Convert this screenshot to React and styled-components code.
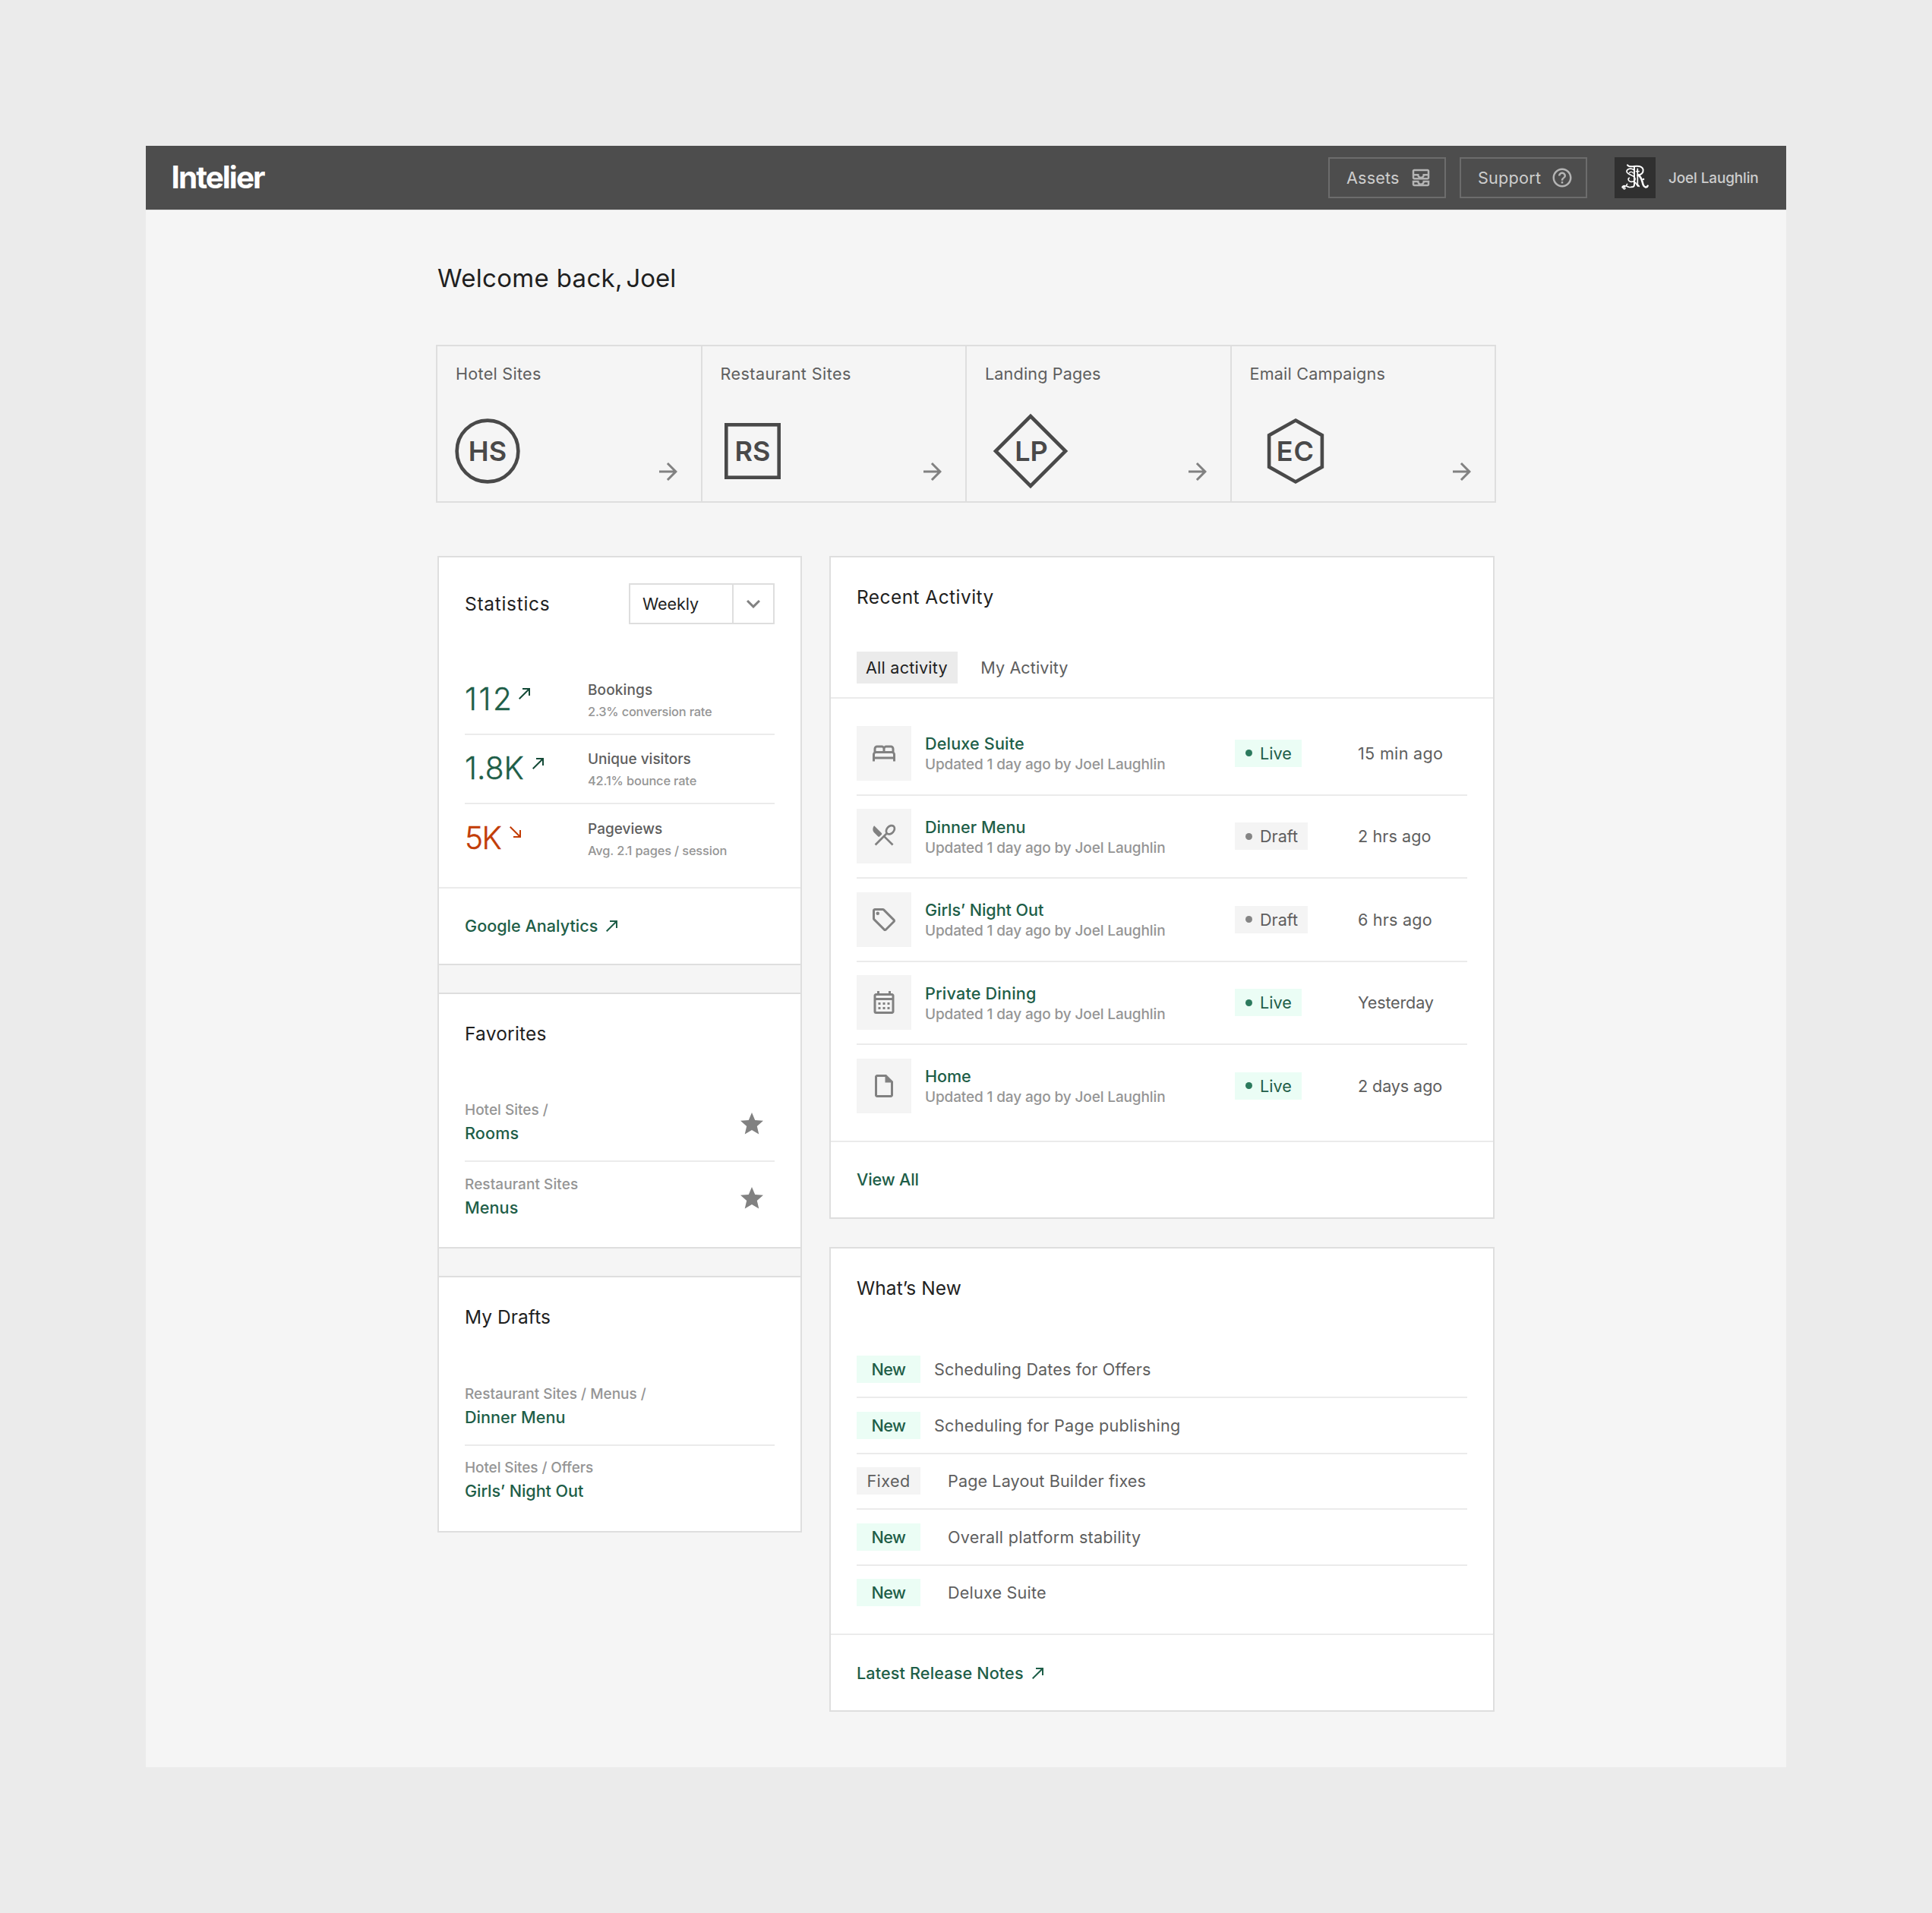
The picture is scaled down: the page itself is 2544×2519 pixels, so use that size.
import React from 'react';
import styled, { createGlobalStyle } from 'styled-components';
import {
  MdOutlineAllInbox, MdHelpOutline, MdOutlineBed, MdOutlineLocalOffer, MdOutlineCalendarMonth,
  MdOutlineInsertDriveFile, MdStar, MdExpandMore, MdArrowForward, MdCallMade,
} from 'react-icons/md';

const color = {
  backdrop: '#ebebeb',
  surface: '#f5f5f5',
  bar: '#4d4d4d',
  ink: '#1f1f1f',
  text: '#5e5e5e',
  muted: '#959595',
  icon: '#818181',
  border: '#dedede',
  rule: '#ebebeb',
  green: '#1e5e48',
  greenDark: '#144a37',
  greenDot: '#2c7a5d',
  mint: '#ebfdf5',
  red: '#c23c05',
};

const GlobalStyle = createGlobalStyle`
  *, *::before, *::after { box-sizing: border-box; }
  body {
    margin: 0;
    background: ${color.backdrop};
    font-family: Inter, "Liberation Sans", sans-serif;
    font-size: 21.6px;
    color: ${color.ink};
    -webkit-font-smoothing: antialiased;
  }
  h1, h2, p { margin: 0; font-weight: 400; }
  svg { display: block; flex: none; }
`;

const track = ({ $track = 0 }) => `letter-spacing: ${$track}px;`;

/* ---------- shell ---------- */

const Backdrop = styled.div`
  min-height: 2519px;
  padding: 192px 192px 192px;
`;

const Frame = styled.div`
  width: 2160px;
  height: 2135px;
  background: ${color.surface};
`;

const TopBar = styled.header`
  display: flex;
  align-items: center;
  height: 84px;
  padding: 0 37px 0 33.5px;
  background: ${color.bar};
  box-shadow: 0 1px 0 #e0e0e0;
`;

const Brand = styled.div`
  flex: 1;
  font-size: 40.5px;
  line-height: 48px;
  font-weight: 700;
  letter-spacing: -1.95px;
  color: #fff;
`;

const NavButton = styled.button`
  display: flex;
  align-items: center;
  justify-content: space-between;
  width: ${({ $width }) => $width}px;
  height: 54px;
  margin-right: 18px;
  padding: 0 16px 0 22px;
  border: 2px solid #6c6c6c;
  background: none;
  font: inherit;
  color: #cdcdcd;
  ${track}
  svg { color: #b4b4b4; }
`;

const Avatar = styled.div`
  width: 54px;
  height: 54px;
  margin-left: 18px;
  background: #303030;
`;

const UserName = styled.div`
  width: 118px;
  margin-left: 17px;
  font-size: 19px;
  font-weight: 500;
  letter-spacing: -0.15px;
  color: #cdcdcd;
  white-space: nowrap;
`;

const Main = styled.main`
  width: 1392px;
  margin: 0 auto;
  padding-top: 70px;
`;

const Welcome = styled.h1`
  font-size: 33px;
  line-height: 40px;
  letter-spacing: 0.32px;
`;

const FirstName = styled.span`
  margin-left: -5px;
  letter-spacing: 0;
`;

/* ---------- site tiles ---------- */

const Tiles = styled.div`
  display: grid;
  grid-template-columns: repeat(4, 1fr);
  width: 1396px;
  margin: 68px 0 70px -2px;
  border: solid ${color.border};
  border-width: 2px 2px 2px 0;
`;

const Tile = styled.a`
  height: 204px;
  padding: 24px 25px 0 24px;
  border-left: 2px solid ${color.border};
`;

const TileLabel = styled.div`
  line-height: 24px;
  color: ${color.text};
  ${track}
`;

const TileFoot = styled.div`
  display: flex;
  align-items: flex-end;
  justify-content: space-between;
  margin-top: 40px;
  svg:last-child { margin-bottom: 5px; color: ${color.icon}; }
`;

const Emblem = styled.svg`
  overflow: visible;
  fill: none;
  stroke: #494949;
  stroke-width: 4.6;
  text {
    fill: #494949;
    stroke: none;
    font: 600 36px Inter, "Liberation Sans", sans-serif;
    text-anchor: middle;
  }
`;

/* ---------- cards ---------- */

const Columns = styled.div`
  display: grid;
  grid-template-columns: 480px 876px;
  justify-content: space-between;
  align-items: start;
`;

const Card = styled.section`
  border: 2px solid ${color.border};
  background: #fff;
`;

const Stack = styled.div`
  border: solid ${color.border};
  border-width: 0 2px;
`;

const StackCard = styled.section`
  border: solid ${color.border};
  border-width: 2px 0;
  height: ${({ $height }) => $height}px;
  margin-bottom: 36px;
  background: #fff;
  &:last-child { margin-bottom: 0; }
`;

const CardHead = styled.div`
  display: flex;
  align-items: center;
  justify-content: space-between;
  padding: ${({ $top = 36 }) => $top}px 34px 0;
`;

const CardTitle = styled.h2`
  font-size: 24.5px;
  line-height: 32px;
  ${track}
`;

const CardFoot = styled.div`
  display: flex;
  align-items: center;
  height: 101px;
  margin-top: ${({ $gap = 16 }) => $gap}px;
  padding: 0 34px;
  border-top: 2px solid ${color.rule};
`;

const FootLink = styled.a`
  display: flex;
  align-items: center;
  gap: 7px;
  line-height: 28px;
  font-weight: 500;
  color: ${color.green};
  ${track}
`;

const Rows = styled.div`
  margin: ${({ $top }) => $top}px 34px 0;
`;

const Row = styled.div`
  display: flex;
  align-items: center;
  height: ${({ $height }) => $height}px;
  border-bottom: 2px solid ${color.rule};
  &:last-child { border-bottom-color: transparent; }
`;

/* ---------- statistics ---------- */

const Select = styled.div`
  display: flex;
  width: 192px;
  height: 54px;
  border: 2px solid ${color.border};
`;

const SelectValue = styled.div`
  flex: 1;
  padding-left: 16px;
  line-height: 50px;
  letter-spacing: -0.1px;
`;

const SelectToggle = styled.div`
  display: flex;
  align-items: center;
  justify-content: center;
  width: 54px;
  border-left: 2px solid ${color.border};
  color: ${color.icon};
`;

const Figure = styled.div`
  display: flex;
  width: 162px;
  padding-left: ${({ $indent }) => $indent}px;
  color: ${({ $down }) => ($down ? color.red : color.green)};
  svg {
    margin: ${({ $down }) => ($down ? '4px' : '4.5px')} 0 0 ${({ $gap }) => $gap}px;
    color: ${({ $down }) => ($down ? color.red : color.greenDark)};
    transform: ${({ $down }) => ($down ? 'rotate(90deg)' : 'none')};
  }
`;

const FigureValue = styled.span`
  font-size: 40.5px;
  line-height: 48px;
  font-weight: 300;
  -webkit-text-stroke: 0.4px currentColor;
  ${track}
`;

const Metric = styled.div`
  padding-top: 4px;
  font-weight: 500;
  line-height: 28px;
`;

const MetricName = styled.div`
  font-size: 19px;
  color: ${color.text};
  ${track}
`;

const MetricNote = styled.div`
  font-size: 16.4px;
  color: ${color.muted};
  ${track}
`;

/* ---------- favorites / drafts ---------- */

const Crumb = styled.div`
  flex: 1;
  padding-bottom: 6px;
`;

const CrumbPath = styled.div`
  font-size: 19px;
  line-height: 31px;
  font-weight: 500;
  color: ${color.muted};
  ${track}
`;

const CrumbName = styled.a`
  display: block;
  line-height: 31px;
  font-weight: 500;
  color: ${color.green};
  ${track}
`;

const StarSlot = styled.span`
  margin-right: 12px;
  color: ${color.icon};
`;

/* ---------- activity ---------- */

const Tabs = styled.div`
  display: flex;
  gap: 18px;
  margin-top: 56px;
  padding: 0 34px 18px;
  border-bottom: 2px solid ${color.rule};
`;

const Tab = styled.a`
  padding: 0 13.5px 0 12px;
  line-height: 42px;
  background: ${({ $active }) => ($active ? '#ebebeb' : 'none')};
  color: ${({ $active }) => ($active ? color.ink : color.text)};
  ${track}
`;

const Thumb = styled.div`
  display: grid;
  place-items: center;
  width: 72px;
  height: 72px;
  background: #f4f4f4;
  color: ${color.icon};
`;

const Entry = styled.div`
  width: 408px;
  margin-left: 18px;
  padding-top: 3px;
  line-height: 27px;
`;

const EntryName = styled.a`
  display: block;
  font-weight: 500;
  color: ${color.green};
  ${track}
`;

const EntryNote = styled.div`
  font-size: 19px;
  font-weight: 500;
  letter-spacing: -0.13px;
  color: ${color.muted};
`;

const StatusCell = styled.div`
  width: 162px;
`;

const Badge = styled.span`
  display: inline-flex;
  align-items: center;
  justify-content: ${({ $width }) => ($width ? 'center' : 'flex-start')};
  width: ${({ $width }) => ($width ? `${$width}px` : 'auto')};
  height: 36px;
  padding: ${({ $width }) => ($width ? '0' : '0 13px 0 13.5px')};
  background: ${({ $tone }) => ($tone === 'green' ? color.mint : '#f4f4f4')};
  color: ${({ $tone }) => ($tone === 'green' ? color.green : color.text)};
  font-weight: ${({ $strong }) => ($strong ? 500 : 400)};
  vertical-align: top;
  ${track}
`;

const Dot = styled.span`
  width: 9px;
  height: 9px;
  margin-right: 10.5px;
  border-radius: 50%;
  background: ${({ $tone }) => ($tone === 'green' ? color.greenDot : '#858585')};
`;

const When = styled.div`
  color: ${color.text};
  ${track}
`;

/* ---------- what's new ---------- */

const News = styled.div`
  margin-left: ${({ $inset }) => ($inset ? 36 : 18)}px;
  color: ${color.text};
  ${track}
`;

const RightColumn = styled.div`
  display: grid;
  gap: 37px;
`;

/* ---------- drawings ---------- */

const RestaurantIcon = () => (
  <svg width="36" height="36" viewBox="0 0 24 24" fill="none" stroke="currentColor" strokeWidth="1.8">
    <path
      d="M3.4 2.9 9.9 9.4c.35.35.35.9 0 1.25L8.1 12.4c-.35.35-.9.35-1.25 0L3.3 8.85C1.9 7.4 1.85 4.8 3.4 2.9Z"
      fill="currentColor"
      stroke="none"
    />
    <ellipse cx="17.6" cy="6.5" rx="4.3" ry="3.1" transform="rotate(-48 17.6 6.5)" />
    <path d="M14.7 9.3 4.4 19.7M12 12.1l7.7 7.6" />
  </svg>
);

const Monogram = () => (
  <svg width="54" height="54" viewBox="0 0 162 162" fill="none" stroke="#fff" strokeLinecap="round" strokeLinejoin="round">
    <path d="M51 31c6 9 16 6 26 5 18-2 34-1 36 14 1 12-7 20-22 21" strokeWidth="6" />
    <path d="M78 38v70c0 7-5 10-11 10" strokeWidth="6" />
    <path d="M91 46v62l6 7" strokeWidth="5" />
    <path d="M94 71c14 8 14 24 19 38 4 11 15 13 18 4" strokeWidth="7.5" />
    <path d="M76 50c-10-8-27-5-28 6-1 14 30 13 33 28 2 13-14 16-23 10-5-4-5-10 0-12" strokeWidth="5" />
    <path d="M58 62c5-6 13-4 15 1" strokeWidth="4" />
    <path d="M66 118c-8 4-14-5-22-4-9 1-13 8-8 11 6 3 8-4 3-6M50 106c-6 4-3 10 4 12M44 114c-8-3-14 0-14 5" strokeWidth="4.5" />
    <path d="M82 100l10 14" strokeWidth="5" />
    <path d="M91 50v12M85 56h12" strokeWidth="4" />
    <circle cx="114" cy="87" r="4" fill="#fff" stroke="none" />
  </svg>
);

const shapes = {
  HS: <circle cx="42" cy="50" r="40.4" />,
  RS: <rect x="7.3" y="15.3" width="69.4" height="69.4" />,
  LP: <path d="M60 4 106 50 60 96 14 50Z" />,
  EC: <path d="M60 9.6 94.9 29.2V70.8L60 90.4 25.1 70.8V29.2Z" />,
};

const tiles = [
  { code: 'HS', label: 'Hotel Sites', t: 0.27, w: 84, x: 42 },
  { code: 'RS', label: 'Restaurant Sites', t: 0.41, w: 84, x: 42 },
  { code: 'LP', label: 'Landing Pages', t: 0.14, w: 120, x: 61 },
  { code: 'EC', label: 'Email Campaigns', t: 0.2, w: 120, x: 60, lt: 1.2 },
];

const stats = [
  { value: '112', t: 2.5, indent: 0, gap: 3, name: 'Bookings', nt: 0.14, note: '2.3% conversion rate', ot: -0.19 },
  { value: '1.8K', t: 0.1, indent: 0, gap: 7.5, name: 'Unique visitors', nt: 0, note: '42.1% bounce rate', ot: -0.15 },
  { value: '5K', t: -1.6, indent: -1, gap: 8, down: true, name: 'Pageviews', nt: 0.03, note: 'Avg. 2.1 pages / session', ot: -0.15 },
];

const favorites = [
  { path: 'Hotel Sites /', pt: 0, name: 'Rooms', nt: 0.13 },
  { path: 'Restaurant Sites', pt: 0.08, name: 'Menus', nt: 0.08 },
];

const drafts = [
  { path: 'Restaurant Sites / Menus /', pt: 0, name: 'Dinner Menu', nt: 0.03 },
  { path: 'Hotel Sites / Offers', pt: -0.11, name: 'Girls’ Night Out', nt: -0.06 },
];

const activity = [
  { icon: <MdOutlineBed size={36} />, name: 'Deluxe Suite', nt: 0.16, live: true, when: '15 min ago', wt: 0.3 },
  { icon: <RestaurantIcon />, name: 'Dinner Menu', nt: 0.03, live: false, when: '2 hrs ago', wt: 0.07 },
  { icon: <MdOutlineLocalOffer size={36} />, name: 'Girls’ Night Out', nt: -0.06, live: false, when: '6 hrs ago', wt: 0.19 },
  { icon: <MdOutlineCalendarMonth size={36} />, name: 'Private Dining', nt: 0.19, live: true, when: 'Yesterday', wt: -0.18 },
  { icon: <MdOutlineInsertDriveFile size={36} />, name: 'Home', nt: -0.1, live: true, when: '2 days ago', wt: -0.11 },
];

const news = [
  { tag: 'New', text: 'Scheduling Dates for Offers', t: 0.12 },
  { tag: 'New', text: 'Scheduling for Page publishing', t: 0.23 },
  { tag: 'Fixed', text: 'Page Layout Builder fixes', t: 0.11, inset: true },
  { tag: 'New', text: 'Overall platform stability', t: 0.26, inset: true },
  { tag: 'New', text: 'Deluxe Suite', t: 0.2, inset: true },
];

const CrumbRow = ({ item, starred }) => (
  <Row $height={97.5}>
    <Crumb>
      <CrumbPath $track={item.pt}>{item.path}</CrumbPath>
      <CrumbName $track={item.nt}>{item.name}</CrumbName>
    </Crumb>
    {starred && <StarSlot><MdStar size={36} /></StarSlot>}
  </Row>
);

export default function App() {
  return (
    <Backdrop>
      <GlobalStyle />
      <Frame>
        <TopBar>
          <Brand>Intelier</Brand>
          <NavButton $width={155} $track={0.17}>Assets <MdOutlineAllInbox size={30} /></NavButton>
          <NavButton $width={168} $track={0.25}>Support <MdHelpOutline size={30} /></NavButton>
          <Avatar><Monogram /></Avatar>
          <UserName>Joel Laughlin</UserName>
        </TopBar>

        <Main>
          <Welcome>Welcome back, <FirstName>Joel</FirstName></Welcome>

          <Tiles>
            {tiles.map((tile) => (
              <Tile key={tile.code}>
                <TileLabel $track={tile.t}>{tile.label}</TileLabel>
                <TileFoot>
                  <Emblem width={tile.w} height="100">
                    {shapes[tile.code]}
                    <text x={tile.x} y="63" letterSpacing={tile.lt || 0}>{tile.code}</text>
                  </Emblem>
                  <MdArrowForward size={36} />
                </TileFoot>
              </Tile>
            ))}
          </Tiles>

          <Columns>
            <Stack>
              <StackCard $height={538.5}>
                <CardHead $top={34}>
                  <CardTitle $track={0.7}>Statistics</CardTitle>
                  <Select>
                    <SelectValue>Weekly</SelectValue>
                    <SelectToggle><MdExpandMore size={36} /></SelectToggle>
                  </Select>
                </CardHead>
                <Rows $top={54}>
                  {stats.map((s) => (
                    <Row key={s.name} $height={91.5}>
                      <Figure $down={s.down} $gap={s.gap} $indent={s.indent}>
                        <FigureValue $track={s.t}>{s.value}</FigureValue>
                        <MdCallMade size={24} />
                      </Figure>
                      <Metric>
                        <MetricName $track={s.nt}>{s.name}</MetricName>
                        <MetricNote $track={s.ot}>{s.note}</MetricNote>
                      </Metric>
                    </Row>
                  ))}
                </Rows>
                <CardFoot $gap={17}>
                  <FootLink>Google Analytics <MdCallMade size={24} /></FootLink>
                </CardFoot>
              </StackCard>

              <StackCard $height={337.5}>
                <CardHead><CardTitle $track={0.22}>Favorites</CardTitle></CardHead>
                <Rows $top={56}>
                  {favorites.map((f) => <CrumbRow key={f.name} item={f} starred />)}
                </Rows>
              </StackCard>

              <StackCard $height={337.5}>
                <CardHead><CardTitle $track={0.05}>My Drafts</CardTitle></CardHead>
                <Rows $top={56}>
                  {drafts.map((d) => <CrumbRow key={d.name} item={d} />)}
                </Rows>
              </StackCard>
            </Stack>

            <RightColumn>
              <Card>
                <CardHead><CardTitle $track={0.43}>Recent Activity</CardTitle></CardHead>
                <Tabs>
                  <Tab $active $track={0.22}>All activity</Tab>
                  <Tab $track={0.08}>My Activity</Tab>
                </Tabs>
                <Rows $top={18}>
                  {activity.map((a) => {
                    const tone = a.live ? 'green' : 'grey';
                    return (
                      <Row key={a.name} $height={109.5}>
                        <Thumb>{a.icon}</Thumb>
                        <Entry>
                          <EntryName $track={a.nt}>{a.name}</EntryName>
                          <EntryNote>Updated 1 day ago by Joel Laughlin</EntryNote>
                        </Entry>
                        <StatusCell>
                          <Badge $tone={tone}><Dot $tone={tone} />{a.live ? 'Live' : 'Draft'}</Badge>
                        </StatusCell>
                        <When $track={a.wt}>{a.when}</When>
                      </Row>
                    );
                  })}
                </Rows>
                <CardFoot>
                  <FootLink $track={-0.14}>View All</FootLink>
                </CardFoot>
              </Card>

              <Card>
                <CardHead><CardTitle $track={0.08}>What’s New</CardTitle></CardHead>
                <Rows $top={56}>
                  {news.map((n) => {
                    const fresh = n.tag === 'New';
                    return (
                      <Row key={n.text} $height={73.5}>
                        <Badge $width={84} $tone={fresh ? 'green' : 'grey'} $strong={fresh} $track={fresh ? -0.6 : 0.4}>
                          {n.tag}
                        </Badge>
                        <News $inset={n.inset} $track={n.t}>{n.text}</News>
                      </Row>
                    );
                  })}
                </Rows>
                <CardFoot>
                  <FootLink $track={0.14}>Latest Release Notes <MdCallMade size={24} /></FootLink>
                </CardFoot>
              </Card>
            </RightColumn>
          </Columns>
        </Main>
      </Frame>
    </Backdrop>
  );
}
